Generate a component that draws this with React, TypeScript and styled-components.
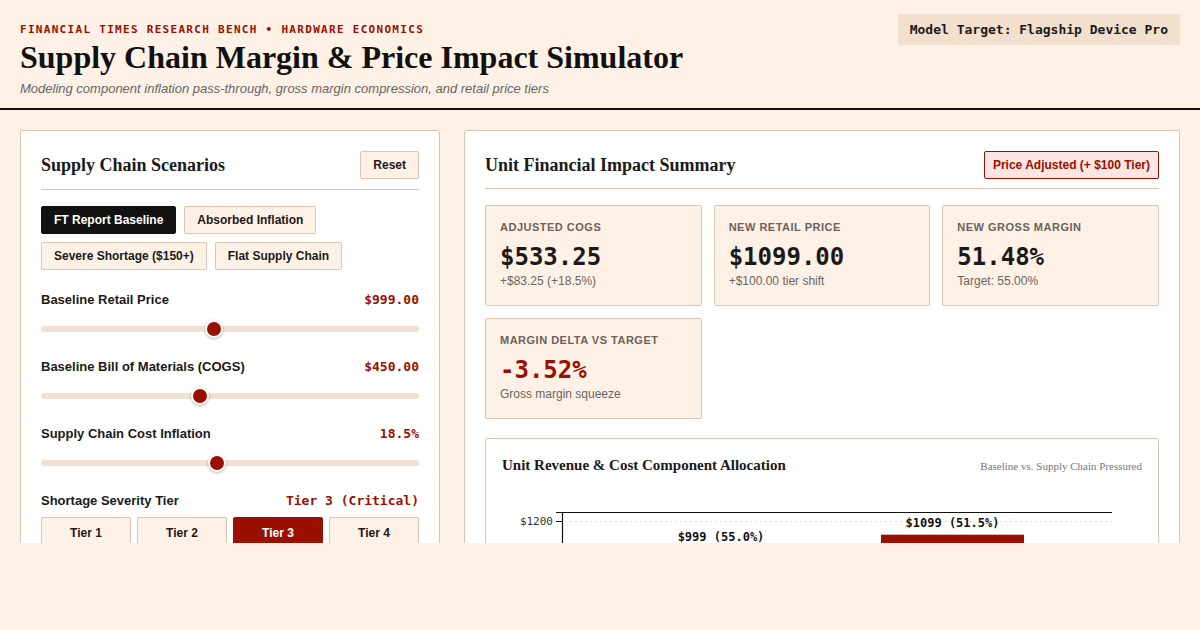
import React, { useState } from "react";
import styled, { createGlobalStyle } from "styled-components";

const RED = "#990f00";
const PAPER = "#fff1e5";
const LINE = "#dcc5b2";
const MONO = `"DejaVu Sans Mono", "Liberation Mono", monospace`;
const SERIF = `"Liberation Serif", "Times New Roman", serif`;
const SANS = `"Liberation Sans", Arial, sans-serif`;

const Global = createGlobalStyle`
  html, body { margin: 0; padding: 0; background: ${PAPER}; }
  body { font-family: ${SANS}; color: #1a1a1a; }
  * { box-sizing: border-box; }
`;

const Frame = styled.div`
  height: 543px;
  overflow: hidden;
`;

const Header = styled.header`
  display: flex;
  justify-content: space-between;
  align-items: flex-start;
  padding: 14px 20px 10px;
  border-bottom: 2px solid #111;
`;

const HeadText = styled.div`
  display: flex;
  flex-direction: column;
  padding-top: 8px;
`;

const Kicker = styled.div`
  font-family: ${MONO};
  font-size: 11px;
  font-weight: 700;
  letter-spacing: 1.3px;
  color: ${RED};
  line-height: 16px;
`;

const Title = styled.h1`
  margin: 0;
  font-family: ${SERIF};
  font-size: 32px;
  font-weight: 700;
  line-height: 38px;
  color: #111;
`;

const Subtitle = styled.p`
  margin: 4px 0 0;
  font-size: 13px;
  font-style: italic;
  color: #666;
  line-height: 18px;
`;

const TargetBadge = styled.div`
  background: #f2dfcd;
  border-radius: 2px;
  padding: 7px 12px;
  font-family: ${MONO};
  font-size: 13px;
  font-weight: 700;
  color: #1a1a1a;
  line-height: 17px;
`;

const Main = styled.main`
  display: grid;
  grid-template-columns: 420px 1fr;
  gap: 24px;
  padding: 20px;
  align-items: start;
`;

const Panel = styled.section`
  background: #fff;
  border: 1px solid ${LINE};
  border-radius: 2px;
  padding: 20px;
`;

const PanelHead = styled.div<{ $tight?: boolean }>`
  display: flex;
  justify-content: space-between;
  align-items: center;
  padding-bottom: ${(p) => (p.$tight ? "9px" : "10px")};
  border-bottom: 1px solid ${LINE};
  margin-bottom: 16px;
`;

const PanelTitle = styled.h2`
  margin: 0;
  font-family: ${SERIF};
  font-size: 18px;
  font-weight: 700;
  color: #1a1a1a;
`;

const GhostButton = styled.button`
  height: 28px;
  padding: 0 12px;
  background: ${PAPER};
  border: 1px solid ${LINE};
  border-radius: 2px;
  font-family: ${SANS};
  font-size: 12px;
  font-weight: 700;
  color: #1a1a1a;
  cursor: pointer;
`;

const Chips = styled.div`
  display: flex;
  flex-wrap: wrap;
  gap: 8px;
  margin-bottom: 22px;
`;

const Chip = styled.button<{ $active?: boolean }>`
  height: 28px;
  padding: 0 12px;
  background: ${(p) => (p.$active ? "#111" : PAPER)};
  color: ${(p) => (p.$active ? "#fff" : "#1a1a1a")};
  border: 1px solid ${(p) => (p.$active ? "#111" : LINE)};
  border-radius: 2px;
  font-family: ${SANS};
  font-size: 12px;
  font-weight: 700;
  cursor: pointer;
`;

const Field = styled.div`
  margin-bottom: 20px;
`;

const FieldHead = styled.div<{ $gap?: number }>`
  display: flex;
  justify-content: space-between;
  align-items: baseline;
  margin-bottom: ${(p) => (p.$gap ?? 12)}px;
`;

const FieldLabel = styled.span`
  font-size: 13px;
  font-weight: 700;
  color: #1a1a1a;
`;

const FieldValue = styled.span`
  font-family: ${MONO};
  font-size: 13px;
  font-weight: 700;
  color: ${RED};
`;

const Range = styled.input`
  -webkit-appearance: none;
  appearance: none;
  display: block;
  width: 100%;
  height: 20px;
  margin: 0 0 1px;
  background: transparent;
  cursor: pointer;
  &::-webkit-slider-runnable-track {
    height: 6px;
    border-radius: 3px;
    background: #f2e0d1;
  }
  &::-webkit-slider-thumb {
    -webkit-appearance: none;
    width: 18px;
    height: 18px;
    margin-top: -6px;
    border-radius: 50%;
    background: ${RED};
    border: 2px solid #fff;
    box-shadow: 0 1px 3px rgba(0, 0, 0, 0.3);
  }
`;

const TierRow = styled.div`
  display: grid;
  grid-template-columns: repeat(4, 1fr);
  gap: 6px;
`;

const TierButton = styled.button<{ $active?: boolean }>`
  height: 32px;
  background: ${(p) => (p.$active ? RED : PAPER)};
  color: ${(p) => (p.$active ? "#fff" : "#1a1a1a")};
  border: 1px solid ${(p) => (p.$active ? RED : LINE)};
  border-radius: 2px;
  font-family: ${SANS};
  font-size: 12px;
  font-weight: 700;
  cursor: pointer;
`;

const AlertBadge = styled.span`
  padding: 6px 8px;
  background: #fde6e2;
  border: 1px solid ${RED};
  border-radius: 2px;
  font-size: 12px;
  font-weight: 700;
  color: ${RED};
  line-height: 14px;
`;

const Cards = styled.div`
  display: grid;
  grid-template-columns: repeat(3, 1fr);
  gap: 12px;
  margin-bottom: 19px;
`;

const Card = styled.div`
  background: ${PAPER};
  border: 1px solid ${LINE};
  border-radius: 2px;
  padding: 15px 14px 16px;
`;

const CardLabel = styled.div`
  font-size: 11px;
  font-weight: 700;
  letter-spacing: 0.5px;
  text-transform: uppercase;
  color: #6b625c;
  line-height: 13px;
`;

const CardValue = styled.div<{ $alert?: boolean }>`
  margin-top: 9px;
  font-family: ${MONO};
  font-size: 24px;
  font-weight: 700;
  line-height: 28px;
  color: ${(p) => (p.$alert ? RED : "#1a1a1a")};
`;

const CardSub = styled.div`
  margin-top: 2px;
  font-size: 12px;
  color: #666;
  line-height: 16px;
`;

const ChartBox = styled.div`
  background: #fff;
  border: 1px solid ${LINE};
  border-radius: 2px;
  padding: 18px 16px 16px;
`;

const ChartHead = styled.div`
  display: flex;
  justify-content: space-between;
  align-items: center;
`;

const ChartTitle = styled.h3`
  margin: 0;
  font-family: ${SERIF};
  font-size: 15px;
  font-weight: 700;
  color: #1a1a1a;
`;

const ChartNote = styled.span`
  font-family: ${SERIF};
  font-size: 11px;
  color: #777;
`;

const ChartSvg = styled.svg`
  display: block;
  margin-top: 16px;
`;

const scenarios = [
  "FT Report Baseline",
  "Absorbed Inflation",
  "Severe Shortage ($150+)",
  "Flat Supply Chain",
];

export default function App() {
  const [scenario, setScenario] = useState(0);
  const [price, setPrice] = useState(999);
  const [cogs, setCogs] = useState(450);
  const [infl, setInfl] = useState(18.5);
  const [tier, setTier] = useState(3);

  const adjCogs = cogs * (1 + infl / 100);
  const newPrice = price + 100;
  const margin = ((newPrice - adjCogs) / newPrice) * 100;
  const delta = margin - 55;

  const scale = 0.1386;
  const zeroY = 197;
  const y = (v: number) => zeroY - v * scale;

  return (
    <>
      <Global />
      <Frame>
        <Header>
          <HeadText>
            <Kicker>FINANCIAL TIMES RESEARCH BENCH • HARDWARE ECONOMICS</Kicker>
            <Title>Supply Chain Margin &amp; Price Impact Simulator</Title>
            <Subtitle>
              Modeling component inflation pass-through, gross margin compression, and retail price tiers
            </Subtitle>
          </HeadText>
          <TargetBadge>Model Target: Flagship Device Pro</TargetBadge>
        </Header>
        <Main>
          <Panel>
            <PanelHead>
              <PanelTitle>Supply Chain Scenarios</PanelTitle>
              <GhostButton onClick={() => { setPrice(999); setCogs(450); setInfl(18.5); setTier(3); setScenario(0); }}>
                Reset
              </GhostButton>
            </PanelHead>
            <Chips>
              {scenarios.map((s, i) => (
                <Chip key={s} $active={i === scenario} onClick={() => setScenario(i)}>
                  {s}
                </Chip>
              ))}
            </Chips>
            <Field>
              <FieldHead>
                <FieldLabel>Baseline Retail Price</FieldLabel>
                <FieldValue>${price.toFixed(2)}</FieldValue>
              </FieldHead>
              <Range type="range" min={499} max={1599} step={1} value={price} onChange={(e) => setPrice(+e.target.value)} />
            </Field>
            <Field>
              <FieldHead>
                <FieldLabel>Baseline Bill of Materials (COGS)</FieldLabel>
                <FieldValue>${cogs.toFixed(2)}</FieldValue>
              </FieldHead>
              <Range type="range" min={200} max={800} step={1} value={cogs} onChange={(e) => setCogs(+e.target.value)} />
            </Field>
            <Field>
              <FieldHead>
                <FieldLabel>Supply Chain Cost Inflation</FieldLabel>
                <FieldValue>{infl.toFixed(1)}%</FieldValue>
              </FieldHead>
              <Range type="range" min={0} max={40} step={0.5} value={infl} onChange={(e) => setInfl(+e.target.value)} />
            </Field>
            <Field>
              <FieldHead $gap={9}>
                <FieldLabel>Shortage Severity Tier</FieldLabel>
                <FieldValue>Tier {tier} (Critical)</FieldValue>
              </FieldHead>
              <TierRow>
                {[1, 2, 3, 4].map((t) => (
                  <TierButton key={t} $active={t === tier} onClick={() => setTier(t)}>
                    Tier {t}
                  </TierButton>
                ))}
              </TierRow>
            </Field>
          </Panel>

          <Panel>
            <PanelHead $tight>
              <PanelTitle>Unit Financial Impact Summary</PanelTitle>
              <AlertBadge>Price Adjusted (+ $100 Tier)</AlertBadge>
            </PanelHead>
            <Cards>
              <Card>
                <CardLabel>Adjusted COGS</CardLabel>
                <CardValue>${adjCogs.toFixed(2)}</CardValue>
                <CardSub>+${(adjCogs - cogs).toFixed(2)} (+{infl.toFixed(1)}%)</CardSub>
              </Card>
              <Card>
                <CardLabel>New Retail Price</CardLabel>
                <CardValue>${newPrice.toFixed(2)}</CardValue>
                <CardSub>+$100.00 tier shift</CardSub>
              </Card>
              <Card>
                <CardLabel>New Gross Margin</CardLabel>
                <CardValue>{margin.toFixed(2)}%</CardValue>
                <CardSub>Target: 55.00%</CardSub>
              </Card>
              <Card>
                <CardLabel>Margin Delta vs Target</CardLabel>
                <CardValue $alert>{delta.toFixed(2)}%</CardValue>
                <CardSub>Gross margin squeeze</CardSub>
              </Card>
            </Cards>
            <ChartBox>
              <ChartHead>
                <ChartTitle>Unit Revenue &amp; Cost Component Allocation</ChartTitle>
                <ChartNote>Baseline vs. Supply Chain Pressured</ChartNote>
              </ChartHead>
              <ChartSvg width="640" height="220" viewBox="0 0 640 220">
                <line x1="54" y1="22.5" x2="610" y2="22.5" stroke="#111" strokeWidth="1.2" />
                <line x1="63" y1="31.5" x2="610" y2="31.5" stroke="#f0d8c6" strokeDasharray="2 3" />
                <line x1="60.5" y1="22" x2="60.5" y2="200" stroke="#111" strokeWidth="1.2" />
                <line x1="54" y1="31.5" x2="60" y2="31.5" stroke="#111" />
                <text x="51" y="35" textAnchor="end" fontFamily={MONO} fontSize="11" fill="#333">$1200</text>
                <rect x="146" y={y(999)} width="143" height={zeroY - y(999)} fill="#b9a999" />
                <text x="219" y={y(999) - 8} textAnchor="middle" fontFamily={MONO} fontSize="12" fontWeight="700" fill="#111">
                  $999 (55.0%)
                </text>
                <rect x="379" y={y(newPrice)} width="143" height={zeroY - y(newPrice)} fill={RED} />
                <text x="450.5" y={y(newPrice) - 8} textAnchor="middle" fontFamily={MONO} fontSize="12" fontWeight="700" fill="#111">
                  ${newPrice} ({margin.toFixed(1)}%)
                </text>
              </ChartSvg>
            </ChartBox>
          </Panel>
        </Main>
      </Frame>
    </>
  );
}
